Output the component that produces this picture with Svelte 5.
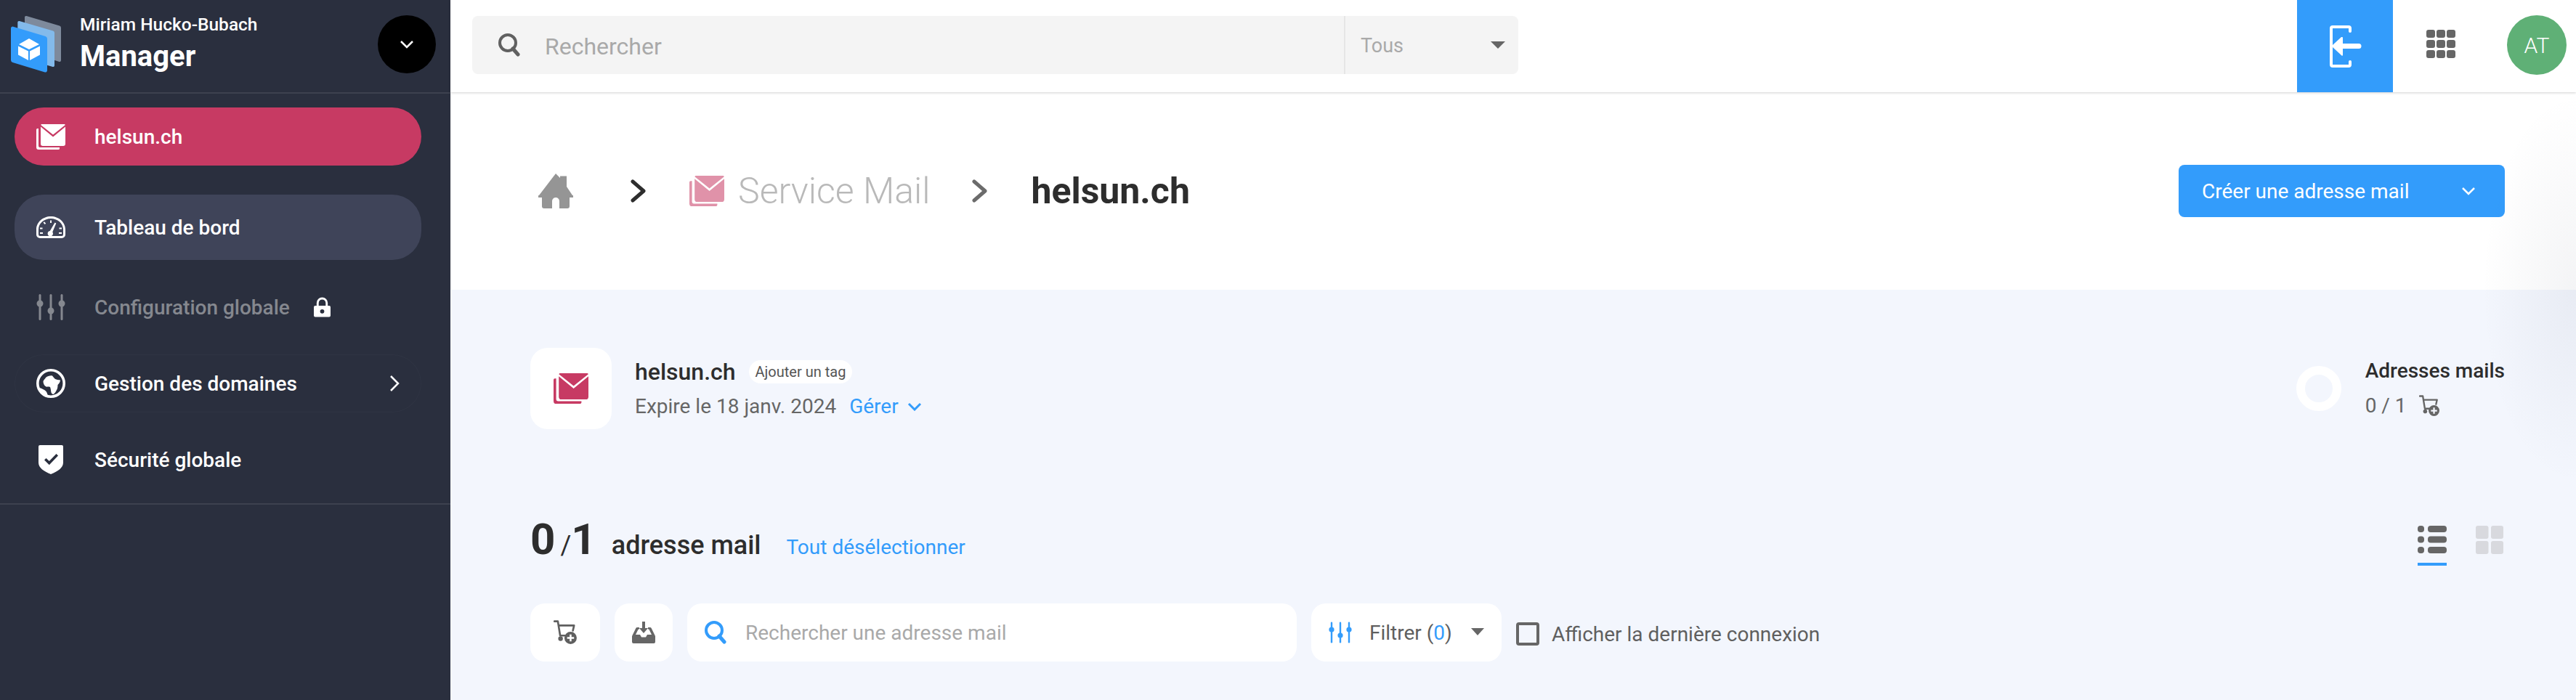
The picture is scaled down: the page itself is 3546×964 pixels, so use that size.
<script>
  const apps = Array(9);
</script>

{#snippet mail(cls)}
  <svg class={cls} viewBox="0 0 40 35"><path d="M8 0H38C39 0 39.6.5 39.9 1L23 14.5 6.1 1C6.4.5 7 0 8 0Z"/><path d="M6 3.5 23 17.5 40 3.5V27a3 3 0 0 1-3 3H9a3 3 0 0 1-3-3Z"/><path d="M1.5 6H3V30a2 2 0 0 0 2 2H32v1.5A1.5 1.5 0 0 1 30.5 35H3a3 3 0 0 1-3-3V7.5A1.5 1.5 0 0 1 1.5 6Z"/></svg>
{/snippet}
{#snippet sliders(cls)}
  <svg class={cls} viewBox="0 0 40 36"><rect x="3.500" width="3" height="36" rx="1.500"/><circle cx="5" cy="13" r="4.500"/><rect x="18.500" width="3" height="36" rx="1.500"/><circle cx="20" cy="23" r="4.500"/><rect x="33.500" width="3" height="36" rx="1.500"/><circle cx="35" cy="13" r="4.500"/></svg>
{/snippet}
{#snippet cart(cls)}
  <svg class={cls} viewBox="0 0 30 32"><path class="line" d="M1 1.500h4.500l3 18.500h7M7 7h19.500l-1.500 6.500"/><circle cx="9" cy="24" r="3"/><path fill-rule="evenodd" d="M22 16a8 8 0 1 1 0 16 8 8 0 0 1 0-16Zm-1.200 3.500v3.300h-3.300v2.400h3.300v3.300h2.400v-3.300h3.300v-2.400h-3.300v-3.300Z" transform="translate(0 -1)"/></svg>
{/snippet}
{#snippet search(cls)}
  <svg class={cls} viewBox="0 0 30 32"><circle cx="13" cy="13" r="11" fill="none" stroke="currentColor" stroke-width="4"/><path d="M20 21l7 8" fill="none" stroke="currentColor" stroke-width="5" stroke-linecap="round"/></svg>
{/snippet}

<div class="shell">
  <aside class="side">
    <header class="brand">
      <svg class="logo" viewBox="0 0 70 78">
        <path d="M19 2a2 2 0 0 1 2.500-2L67 13.500a3 3 0 0 1 2 3V61a2 2 0 0 1-2.500 2L19 48Z" fill="#7e8a9c"/>
        <path d="M9.300 9a2 2 0 0 1 2.500-2L58 20.500a3 3 0 0 1 2 3V68a2 2 0 0 1-2.500 2L9.300 56Z" fill="#83baeb"/>
        <path d="M0 17a2.500 2.500 0 0 1 3.200-2.300L47.500 28a3.500 3.500 0 0 1 2.500 3.300V75a2.500 2.500 0 0 1-3.200 2.500L2.500 64A3.500 3.500 0 0 1 0 60.700Z" fill="#339cfb"/>
        <path d="M25 31 39 39 25 46 11 39Z" fill="#fff"/>
        <path d="M10 41.500 24 48.500V61L10 53.500Z" fill="#fff"/>
        <path d="M40 41.500 26 48.500V61L40 53.500Z" fill="#fff"/>
      </svg>
      <div class="who">
        <div class="who-name">Miriam Hucko-Bubach</div>
        <div class="who-app">Manager</div>
      </div>
      <button class="round" aria-label="Ouvrir">
        <svg viewBox="0 0 20 12" class="chev-sm"><path d="M2 2l8 8 8-8"/></svg>
      </button>
    </header>
    <nav class="nav">
      <a class="item pink">
        <span class="ico">{@render mail('i-mail')}</span>
        <span>helsun.ch</span>
      </a>
      <a class="item active">
        <span class="ico">
          <svg class="i-gauge" viewBox="0 0 40 30"><path fill-rule="evenodd" d="M20 0C9 0 0 8 0 18v7a5 5 0 0 0 5 5h30a5 5 0 0 0 5-5v-7C40 8 31 0 20 0Zm0 3c9 0 17 6.500 17 15v7a2 2 0 0 1-2 2H5a2 2 0 0 1-2-2v-7C3 9.500 11 3 20 3Z"/><path d="M19 5.500h2V9h-2ZM9.500 8.500 11 7.200l2.200 2.600-1.500 1.300ZM5 15.500h3.500v2H5Zm26.500 0H35v2h-3.500ZM5 22h4v2H5Zm26 0h4v2h-4ZM25.500 8.500l1.800.9-5 12a3.700 3.700 0 1 1-3.500-1.500Z"/></svg>
        </span>
        <span>Tableau de bord</span>
      </a>
      <a class="item muted">
        <span class="ico">{@render sliders('i-sliders')}</span>
        <span>Configuration globale</span>
        <svg class="i-lock" viewBox="0 0 24 28"><path fill-rule="evenodd" d="M12 0a8 8 0 0 1 8 8v4h2a2 2 0 0 1 2 2v12a2 2 0 0 1-2 2H2a2 2 0 0 1-2-2V14a2 2 0 0 1 2-2h2V8a8 8 0 0 1 8-8Zm0 3a5 5 0 0 0-5 5v4h10V8a5 5 0 0 0-5-5Zm0 14a3 3 0 1 0 0 6 3 3 0 0 0 0-6Z"/></svg>
      </a>
      <a class="item outlined">
        <span class="ico">
          <svg class="i-globe" viewBox="0 0 40 40"><circle cx="20" cy="20" r="18.200" fill="none" stroke="currentColor" stroke-width="3.600"/><path d="M13 12C15.500 10 19 9 22 9.500 23.500 11 24.500 13 26 14L29 15 33 15.500C33 18 31 20.500 29.500 22 29.500 25 29 28 27.500 30 26.500 32 25 34 23.500 35 22 35 21 34 20.500 32.500 20 30 20 27.500 19 25 18 24 17 24.500 15.500 24.500 13.500 25 12.500 24 11.500 23 10 21 9.500 19 9.500 17 10.500 15 12 13.500 13 12Z"/><path d="M4 26c3.500 1 7 2.500 9.500 5 1.500 2 1.700 4 2.500 6.500l-5-1.500L5 30Z"/></svg>
        </span>
        <span>Gestion des domaines</span>
        <svg class="i-next" viewBox="0 0 14 24"><path d="M2 2l10 10-10 10"/></svg>
      </a>
      <a class="item">
        <span class="ico">
          <svg class="i-shield" viewBox="0 0 34 40"><path fill-rule="evenodd" d="M2 0h30a2 2 0 0 1 2 2v22c0 7-7 12-17 16C7 36 0 31 0 24V2a2 2 0 0 1 2-2Zm22.500 12L14.800 22l-4.300-4-2.500 2.500 6.800 6.700 12.200-12.700Z"/></svg>
        </span>
        <span>Sécurité globale</span>
      </a>
    </nav>
  </aside>

  <main class="main">
    <div class="topbar">
      <div class="global-search">
        {@render search('i-search-top')}
        <span class="gs-text">Rechercher</span>
        <div class="gs-select"><span>Tous</span><i class="tri"></i></div>
      </div>
      <div class="top-actions">
        <button class="login" aria-label="Connexion">
          <svg viewBox="0 0 46 60"><path d="M30 9V5a2 2 0 0 0-2-2H6a2 2 0 0 0-2 2v50a2 2 0 0 0 2 2h22a2 2 0 0 0 2-2v-4" fill="none" stroke="#fff" stroke-width="4" stroke-linecap="round"/><path d="M19 17a1 1 0 0 1 1 1v8h22a3 3 0 0 1 0 7H20v9a1 1 0 0 1-1.500.5L6 31a2 2 0 0 1 0-3l12-11Z" fill="#fff"/></svg>
        </button>
        <div class="apps">
          {#each apps as _}<i></i>{/each}
        </div>
        <div class="avatar">AT</div>
      </div>
    </div>

    <div class="crumbs">
      <svg class="i-home" viewBox="0 0 48 48"><path d="M24 0l6 6V3.500h9V18l8 12a1 1 0 0 1 0 3h-4v12a3 3 0 0 1-3 3H29V38a5 5 0 0 0-10 0v10H8a3 3 0 0 1-3-3V33H1a1 1 0 0 1 0-3Z"/></svg>
      <svg class="crumb-sep dark" viewBox="0 0 22 32"><path d="M3 3l15 13L3 29"/></svg>
      <span class="crumb-app">{@render mail('i-mail-big')}<span class="crumb-app-name">Service Mail</span></span>
      <svg class="crumb-sep gray" viewBox="0 0 22 32"><path d="M3 3l15 13L3 29"/></svg>
      <span class="crumb-cur">helsun.ch</span>
      <button class="create">
        <span>Créer une adresse mail</span>
        <svg viewBox="0 0 20 12"><path d="M2 2l8 8 8-8"/></svg>
      </button>
    </div>

    <section class="content">
      <div class="info">
        <div class="tile">{@render mail('i-mail-tile')}</div>
        <div class="info-text">
          <div class="info-title"><strong>helsun.ch</strong><span class="tag">Ajouter un tag</span></div>
          <div class="info-sub"><span>Expire le 18 janv. 2024</span><a class="manage">Gérer <svg viewBox="0 0 20 12"><path d="M2 2l8 8 8-8"/></svg></a></div>
        </div>
        <div class="stat">
          <div class="ring"></div>
          <div>
            <div class="stat-title">Adresses mails</div>
            <div class="stat-val"><span>0 / 1</span>{@render cart('i-cart-sm')}</div>
          </div>
        </div>
      </div>

      <div class="count-row">
        <span class="big">0</span><span class="slash">/</span><span class="big">1</span>
        <span class="count-label">adresse mail</span>
        <a class="unselect">Tout désélectionner</a>
        <div class="views">
          <div class="view on">
            <svg viewBox="0 0 40 38"><rect y="0" width="9" height="9" rx="4"/><rect x="14" y="0" width="26" height="9" rx="4"/><rect y="14.500" width="9" height="9" rx="4"/><rect x="14" y="14.500" width="26" height="9" rx="4"/><rect y="29" width="9" height="9" rx="4"/><rect x="14" y="29" width="26" height="9" rx="4"/></svg>
          </div>
          <div class="view">
            <svg viewBox="0 0 38 39"><rect width="17.500" height="18" rx="3"/><rect x="21" width="17" height="18" rx="3"/><rect y="21" width="17.500" height="18" rx="3"/><rect x="21" y="21" width="17" height="18" rx="3"/></svg>
          </div>
        </div>
      </div>

      <div class="tools">
        <button class="tool cart-btn" aria-label="Commander">{@render cart('i-cart')}</button>
        <button class="tool inbox-btn" aria-label="Importer">
          <svg class="i-inbox" viewBox="0 0 32 30"><path d="M14 0h4v9h4l-6 7-6-7h4Z"/><path d="M7 8h3v2.500H8.700L5 18h6l2 3.500h6L21 18h6l-3.700-7.500H22V8h3c.7 0 1.300.3 1.600 1L32 20v8a2 2 0 0 1-2 2H2a2 2 0 0 1-2-2v-8L5.400 9C5.700 8.300 6.300 8 7 8Z"/></svg>
        </button>
        <div class="tool find">
          {@render search('i-search-find')}
          <span>Rechercher une adresse mail</span>
        </div>
        <button class="tool filter">
          {@render sliders('i-sliders-blue')}
          <span class="filter-label">Filtrer (<b>0</b>)</span>
          <i class="tri small"></i>
        </button>
        <label class="check"><i></i><span>Afficher la dernière connexion</span></label>
      </div>
    </section>
    <div class="edge-glow"></div>
  </main>
</div>

<style>
  :global(body) { margin: 0; background: #f3f6fd; }
  .shell { display: flex; width: 3546px; height: 964px; overflow: hidden; font-family: Roboto, "Liberation Sans", sans-serif; }
  button { font: inherit; border: 0; padding: 0; }
  svg { display: block; fill: currentColor; flex: none; }

  .side { width: 620px; flex: none; background: #2a2f3e; color: #fff; }
  .brand { height: 129px; border-bottom: 2px solid #3d414f; display: flex; align-items: center; padding: 0 20px 5px 15px; box-sizing: border-box; }
  .logo { width: 70px; height: 78px; margin-right: 25px; }
  .who { flex: 1; margin-bottom: 2px; }
  .who-name { font-size: 24.500px; line-height: 28px; font-weight: 500; margin-bottom: 8px; }
  .who-app { font-size: 40px; line-height: 44px; font-weight: 700; }
  .round { width: 80px; height: 80px; border-radius: 50%; background: #000; display: flex; align-items: center; justify-content: center; }
  .chev-sm { width: 20px; height: 12px; fill: none; stroke: #fff; stroke-width: 2.500; }

  .nav { padding: 19px 40px 20px 20px; border-bottom: 2px solid #3d414f; display: flex; flex-direction: column; gap: 25px; }
  .item { height: 80px; display: flex; align-items: center; border-radius: 40px; padding: 0 30px; font-size: 28px; font-weight: 500; color: #fff; box-sizing: border-box; }
  .ico { width: 40px; margin-right: 40px; display: flex; justify-content: center; flex: none; }
  .pink { background: #c73a63; margin-bottom: 15px; }
  .active { background: #3f4459; height: 90px; }
  .muted { color: #85888f; }
  .outlined { box-shadow: inset 0 0 0 1px #2f3443; }
  .i-mail { width: 40px; height: 35px; }
  .i-gauge { width: 40px; height: 30px; }
  .i-sliders { width: 40px; height: 36px; color: #85888f; }
  .i-lock { width: 23px; height: 28px; margin-left: 33px; color: #fff; }
  .i-globe { width: 40px; height: 40px; }
  .i-shield { width: 34px; height: 40px; }
  .i-next { width: 14px; height: 24px; margin-left: auto; margin-right: 0; fill: none; stroke: #fff; stroke-width: 2.500; }

  .main { flex: 1; min-width: 0; display: flex; flex-direction: column; position: relative; }
  .topbar { height: 127px; background: #fff; display: flex; align-items: center; padding-left: 30px; box-shadow: 0 1px 3px rgba(0,0,0,.18); position: relative; z-index: 1; }
  .global-search { width: 1440px; height: 80px; margin-bottom: 3px; border-radius: 8px; background: #f4f4f4; display: flex; align-items: center; box-sizing: border-box; padding-left: 36px; }
  .i-search-top { width: 30px; height: 32px; color: #606060; margin-right: 34px; }
  .gs-text { flex: 1; font-size: 32px; color: #a9a9a9; padding-top: 3px; }
  .gs-select { width: 240px; height: 100%; border-left: 2px solid #e6e6e6; display: flex; align-items: center; justify-content: space-between; padding: 0 18px 0 21px; box-sizing: border-box; font-size: 27px; color: #a9a9a9; }
  .gs-select span { padding-top: 2px; }
  .tri { width: 0; height: 0; border: 10px solid transparent; border-top: 10px solid #666; border-bottom: 0; display: block; }
  .top-actions { margin-left: auto; display: flex; align-items: center; height: 100%; }
  .login { width: 132px; height: 127px; background: #339cfb; display: flex; align-items: center; justify-content: center; }
  .login svg { width: 46px; height: 60px; }
  .apps { width: 40px; height: 40px; margin: 0 71px 5px 46px; display: grid; grid-template-columns: repeat(3, 12px); grid-auto-rows: 11px; gap: 3px 2px; }
  .apps i { background: #666; border-radius: 3px; }
  .avatar { width: 82px; height: 82px; margin: 0 13px 3px 0; border-radius: 50%; background: #5fb076; color: #fff; display: flex; align-items: center; justify-content: center; font-size: 30px; font-weight: 300; }

  .crumbs { height: 272px; background: #fff; display: flex; align-items: center; padding: 0 98px 0 120px; box-sizing: border-box; border-left: 1px solid #f2f2f2; }
  .i-home { width: 48px; height: 48px; color: #959595; }
  .crumb-sep { width: 22px; height: 32px; fill: none; stroke-width: 5; stroke-linecap: round; stroke-linejoin: round; }
  .dark { stroke: #2d2d2d; margin: 0 59px 0 79px; }
  .gray { stroke: #6b6b6b; margin: 0 59px 0 58px; }
  .crumb-app { display: flex; align-items: center; gap: 19px; }
  .i-mail-big { width: 48px; height: 42px; color: #c73a63; opacity: .55; }
  .crumb-app-name { font-size: 50px; font-weight: 300; color: #b9b9b9; }
  .crumb-cur { font-size: 50px; font-weight: 700; color: #2d2d2d; }
  .create { margin-left: auto; width: 449px; height: 72px; border-radius: 8px; background: #339cfb; color: #fff; display: flex; align-items: center; justify-content: space-between; padding: 0 40px 0 32px; box-sizing: border-box; font-size: 28px; }
  .create svg { width: 20px; height: 12px; fill: none; stroke: #fff; stroke-width: 2.500; }

  .content { flex: 1; background: #f3f6fd; padding: 80px 98px 0 110px; }
  .info { display: flex; align-items: flex-start; height: 112px; }
  .tile { width: 112px; height: 112px; border-radius: 24px; background: #fff; display: flex; align-items: center; justify-content: center; margin-right: 32px; }
  .i-mail-tile { width: 48px; height: 42px; color: #c73a63; }
  .info-title { display: flex; align-items: center; gap: 18px; margin-top: 15px; height: 36px; }
  .info-title strong { font-size: 32px; font-weight: 500; color: #2d2d2d; }
  .tag { height: 32px; padding: 0 9px; border-radius: 16px; background: #fff; font-size: 20px; line-height: 32px; color: #555; }
  .info-sub { display: flex; align-items: center; margin-top: 12px; font-size: 28px; line-height: 36px; color: #666; }
  .manage { color: #339cfb; margin-left: 18px; display: flex; align-items: center; }
  .manage svg { width: 20px; height: 12px; margin-left: 12px; fill: none; stroke: #339cfb; stroke-width: 3; }
  .stat { margin-left: auto; display: flex; align-items: flex-start; margin-top: 14px; }
  .ring { width: 62px; height: 62px; border-radius: 50%; border: 12px solid #fff; box-sizing: border-box; margin: 11px 33px 0 0; }
  .stat-title { font-size: 28px; line-height: 36px; font-weight: 500; color: #2d2d2d; }
  .stat-val { display: flex; align-items: center; margin-top: 12px; font-size: 28px; line-height: 36px; color: #666; }
  .i-cart-sm { width: 28px; height: 30px; margin-left: 17px; color: #666; }
  .line { fill: none; stroke: currentColor; stroke-width: 2.500; stroke-linecap: round; stroke-linejoin: round; }

  .count-row { display: flex; align-items: baseline; height: 60px; margin-top: 128px; color: #2d2d2d; line-height: 48px; }
  .big { font-size: 60px; font-weight: 700; }
  .slash { font-size: 36px; margin: 0 0 0 7px; }
  .count-label { font-size: 36px; font-weight: 500; margin-left: 21px; }
  .unselect { font-size: 28px; color: #339cfb; margin-left: 35px; }
  .views { margin-left: auto; display: flex; gap: 40px; align-self: flex-start; margin-top: 5px; }
  .view { width: 40px; height: 55px; box-sizing: border-box; color: #d8d9de; }
  .view svg { width: 38px; height: 39px; }
  .view.on { width: 40px; color: #666; border-bottom: 4px solid #339cfb; }
  .view.on svg { width: 40px; height: 38px; }

  .tools { display: flex; align-items: center; gap: 20px; margin-top: 52px; }
  .tool { height: 80px; border-radius: 20px; background: #fff; display: flex; align-items: center; justify-content: center; flex: none; }
  .cart-btn { width: 96px; }
  .inbox-btn { width: 80px; }
  .i-cart { width: 32px; height: 34px; color: #5f5f5f; }
  .i-inbox { width: 32px; height: 30px; color: #666; }
  .find { width: 839px; justify-content: flex-start; padding-left: 24px; box-sizing: border-box; font-size: 28px; color: #a9a9a9; }
  .i-search-find { width: 30px; height: 32px; color: #339cfb; margin-right: 26px; }
  .filter { width: 262px; justify-content: flex-start; padding-left: 24px; box-sizing: border-box; font-size: 28px; color: #5f5f5f; }
  .i-sliders-blue { width: 32px; height: 36px; color: #339cfb; margin-right: 24px; }
  .filter-label b { font-weight: 400; color: #339cfb; }
  .small { margin: 0 24px 3px auto; border-width: 9px; border-top-width: 10px; border-bottom: 0; }
  .check { display: flex; align-items: center; font-size: 28px; color: #5f5f5f; gap: 17px; margin-top: 4px; }
  .check i { width: 32px; height: 32px; box-sizing: border-box; border: 4px solid #666; border-radius: 4px; }
  .edge-glow { position: absolute; right: 0; top: 128px; width: 130px; height: 540px; background: radial-gradient(ellipse 100% 50% at 100% 50%, rgba(30,40,70,.05), rgba(30,40,70,0)); pointer-events: none; }
</style>
